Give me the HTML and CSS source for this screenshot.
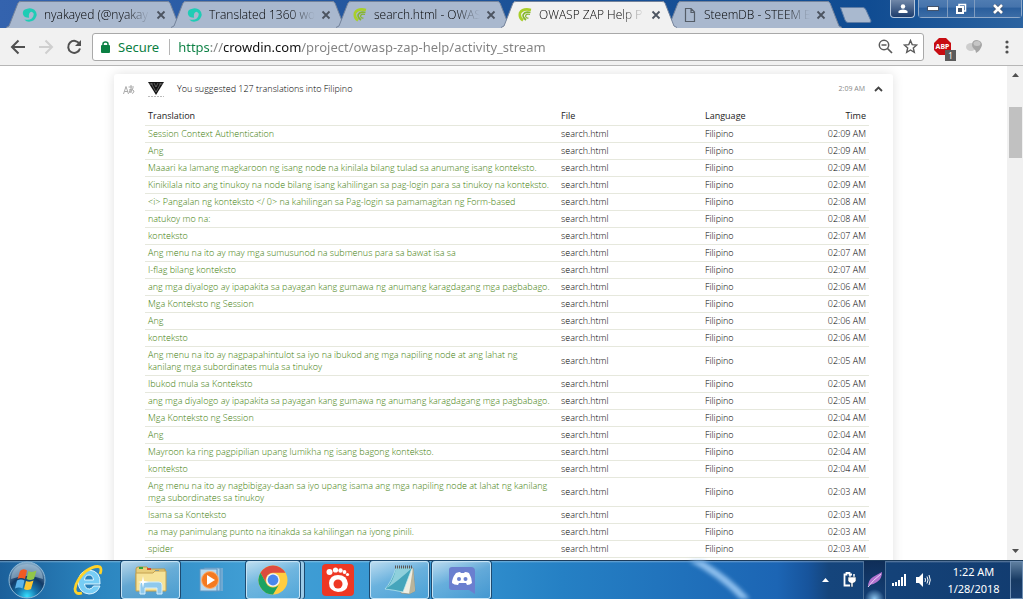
FILE: index.html
```html
<!DOCTYPE html>
<html lang="en">
<head>
  <meta charset="UTF-8">
  <meta name="viewport" content="width=device-width, initial-scale=1.0">
  <title>OWASP ZAP Help Project</title>
  <link rel="stylesheet" href="styles.css">
</head>
<body>
  <!-- Shared shapes -->
  <svg class="defs" aria-hidden="true">
    <symbol id="tab-shape" viewBox="0 0 176 28">
      <path d="M0 28 L3 26 L12 3 Q13 1 15 1 H161 Q163 1 164 3 L173 26 L176 28 Z"/>
      <path d="M0 27.5 L3 26 L12 3 Q13 1.5 15 1.5 H161 Q163 1.5 164 3 L173 26 L176 27.5" class="tab-edge"/>
    </symbol>
    <symbol id="close" viewBox="0 0 10 10">
      <path d="M1.5 1.5 L8.5 8.5 M8.5 1.5 L1.5 8.5" stroke="#4c5460" stroke-width="1.8"/>
    </symbol>
    <symbol id="steem" viewBox="0 0 16 16">
      <path fill="#1fccb5" d="M0 7 Q-1 2 4 1 Q9 -1 13 2 Q17 6 15 10 Q13 15 8 15.500 Q4 16 1.500 13 Q7 14.500 10 12 Q13 9 12 6 Q10 3 8 5 Q6 7 7 11 Q1 11 0 7 Z"/>
    </symbol>
    <symbol id="crowdin" viewBox="0 0 14 14">
      <path d="M13 2 Q5 0 2 5 Q1 10 5 12.500" fill="none" stroke="#a8cf2a" stroke-width="2.600"/>
      <path d="M12.500 4.500 Q7 3 5 7 Q5 10 8 12" fill="none" stroke="#86b52f" stroke-width="1.600"/>
      <path d="M12 6.500 Q8 5.500 7.500 8 Q8 10.500 10.500 10" fill="none" stroke="#86b52f" stroke-width="1.200"/>
    </symbol>
  </svg>

  <header class="browser">
    <div class="tab-strip">
      <div class="tab">
        <svg class="tab-bg"><use href="#tab-shape"/></svg>
        <svg class="favicon"><use href="#steem"/></svg>
        <span class="tab-title">nyakayed (@nyakay</span>
        <button class="tab-close" aria-label="Close tab"><svg><use href="#close"/></svg></button>
      </div>
      <div class="tab">
        <svg class="tab-bg"><use href="#tab-shape"/></svg>
        <svg class="favicon"><use href="#steem"/></svg>
        <span class="tab-title">Translated 1360 wo</span>
        <button class="tab-close" aria-label="Close tab"><svg><use href="#close"/></svg></button>
      </div>
      <div class="tab">
        <svg class="tab-bg"><use href="#tab-shape"/></svg>
        <svg class="favicon"><use href="#crowdin"/></svg>
        <span class="tab-title">search.html - OWAS</span>
        <button class="tab-close" aria-label="Close tab"><svg><use href="#close"/></svg></button>
      </div>
      <div class="tab active">
        <svg class="tab-bg"><use href="#tab-shape"/></svg>
        <svg class="favicon"><use href="#crowdin"/></svg>
        <span class="tab-title">OWASP ZAP Help P</span>
        <button class="tab-close" aria-label="Close tab"><svg><use href="#close"/></svg></button>
      </div>
      <div class="tab">
        <svg class="tab-bg"><use href="#tab-shape"/></svg>
        <svg class="favicon" viewBox="0 0 14 14"><path d="M2.500 .5 H8 L11.500 4 V13.500 H2.500 Z M8 .5 V4.500 H11.500" fill="none" stroke="#555d68" stroke-width="1.200"/></svg>
        <span class="tab-title">SteemDB - STEEM B</span>
        <button class="tab-close" aria-label="Close tab"><svg><use href="#close"/></svg></button>
      </div>
      <button class="new-tab" aria-label="New tab">
        <svg width="33" height="17" viewBox="0 0 33 17"><path d="M1.500 .5 H24 Q26 .5 27 3 L32 14 Q32 15.500 30 15.500 H9 Q7 15.500 6 13 Z" fill="#a9b9cf" stroke="#5f7da6"/></svg>
      </button>
      <div class="window-controls">
        <button class="win-btn profile" aria-label="Profile">
          <svg width="10" height="9" viewBox="0 0 10 9"><circle cx="5" cy="2.500" r="2.200" fill="#fff"/><path d="M.5 9 V7 Q2 5.500 5 5.500 Q8 5.500 9.500 7 V9 Z" fill="#fff"/></svg>
        </button>
        <div class="win-group">
          <button class="win-btn minimize" aria-label="Minimize"><svg width="12" height="5" viewBox="0 0 12 5"><rect x=".5" y=".5" width="11" height="4" fill="#fff" stroke="#43536b"/></svg></button>
          <button class="win-btn restore" aria-label="Restore"><svg width="12" height="12" viewBox="0 0 12 12"><path d="M4 3 V1.500 H10.500 V8 H9" fill="none" stroke="#fff" stroke-width="1.500"/><rect x="2" y="4" width="6" height="6" fill="#43536b" stroke="#fff" stroke-width="2"/></svg></button>
          <button class="win-btn close" aria-label="Close"><svg width="12" height="10" viewBox="0 0 12 10"><path d="M2 1 L10 9 M10 1 L2 9" stroke="#43536b" stroke-width="4"/><path d="M2 1 L10 9 M10 1 L2 9" stroke="#fff" stroke-width="2.600"/></svg></button>
        </div>
      </div>
    </div>

    <div class="toolbar">
      <button class="tool" aria-label="Back"><svg width="16" height="16" viewBox="0 0 16 16"><path d="M15 8 H2.500 M8.500 1.500 L2 8 L8.500 14.500" fill="none" stroke="#505050" stroke-width="2"/></svg></button>
      <button class="tool" aria-label="Forward" disabled><svg width="16" height="16" viewBox="0 0 16 16"><path d="M1 8 H13.500 M7.500 1.500 L14 8 L7.500 14.500" fill="none" stroke="#cfcfcf" stroke-width="2"/></svg></button>
      <button class="tool" aria-label="Reload"><svg width="16" height="16" viewBox="0 0 16 16"><path d="M13.500 5 A6 6 0 1 0 14 9.500" fill="none" stroke="#505050" stroke-width="2"/><path d="M15 1 V7 H9 Z" fill="#505050"/></svg></button>
      <div class="omnibox">
        <svg class="lock" width="9" height="12" viewBox="0 0 9 12"><rect y="4" width="9" height="8" rx="1" fill="#0b8043"/><path d="M2 5 V3 Q2 1 4.500 1 Q7 1 7 3 V5" fill="none" stroke="#0b8043" stroke-width="1.500"/></svg>
        <label class="secure" for="address">Secure</label>
        <input class="address" id="address" type="text" spellcheck="false" value="https://crowdin.com/project/owasp-zap-help/activity_stream">
        <button class="tool" aria-label="Zoom"><svg width="15" height="15" viewBox="0 0 15 15"><circle cx="6" cy="6" r="4.700" fill="none" stroke="#5a5a5a" stroke-width="1.500"/><path d="M3.500 6 H8.500 M9.500 9.500 L14 14" stroke="#5a5a5a" stroke-width="1.700"/></svg></button>
        <button class="tool" aria-label="Bookmark this page"><svg width="15" height="15" viewBox="0 0 15 15"><path d="M7.500 1.500 L9.200 5.600 L13.700 6 L10.300 8.900 L11.300 13.300 L7.500 11 L3.700 13.300 L4.700 8.900 L1.300 6 L5.800 5.600 Z" fill="none" stroke="#5a5a5a" stroke-width="1.400"/></svg></button>
      </div>
      <button class="ext adblock" aria-label="Adblock Plus">
        <svg width="17" height="17" viewBox="0 0 17 17"><path d="M5 0 H12 L17 5 V12 L12 17 H5 L0 12 V5 Z" fill="#c70d12"/></svg>
        <span class="abp">ABP</span>
        <span class="ext-count">1</span>
      </button>
      <button class="ext" aria-label="Extension">
        <svg width="17" height="15" viewBox="0 0 17 15"><ellipse cx="5" cy="8" rx="5" ry="4" fill="#cdcdcd"/><path d="M6 6 Q6 1 11 1 Q16 2 16 6 Q15 11 10 14 Q10 11 8 10 Q6 8 6 6 Z" fill="#a5a5a5"/><ellipse cx="11" cy="4.500" rx="3.500" ry="2.500" fill="#c6c6c6"/></svg>
      </button>
      <button class="menu" aria-label="Menu"><svg width="4" height="14" viewBox="0 0 4 14" fill="#505050"><circle cx="2" cy="2" r="1.600"/><circle cx="2" cy="7" r="1.600"/><circle cx="2" cy="12" r="1.600"/></svg></button>
    </div>
  </header>

  <div class="viewport">
    <main class="page">
      <section class="card">
        <div class="card-head">
          <svg class="type-icon" width="12" height="11" viewBox="0 0 12 11" fill="none" stroke="#aaa"><path d="M.5 10 L3 2.500 L5.500 10 M1.500 7.500 H5"/><path d="M5.500 3 H11 M8 1 V9 M6 6 Q9 4 11 7 Q11 9 9 9.500 M10 4 Q8 9 6.500 8.500 Q5.500 7 8 5.500"/></svg>
          <svg class="avatar" width="16" height="16" viewBox="0 0 16 16"><path d="M0 1 H16 L8 14 Z" fill="#151515"/><path d="M3 2 L8 11 L13 2 M6 2 L8 6 L10 2 M1 3 H5 M11 3 H15" fill="none" stroke="#888" stroke-width=".6"/><path d="M0 15.500 H16" stroke="#bbb" stroke-dasharray="2 1"/></svg>
          <span class="summary">You suggested 127 translations into Filipino</span>
          <time class="when">2:09 AM</time>
          <button class="collapse" aria-label="Collapse"><svg width="9" height="6" viewBox="0 0 9 6"><path d="M1 5 L4.500 1.500 L8 5" fill="none" stroke="#444" stroke-width="1.800"/></svg></button>
        </div>

        <table class="translations">
          <thead>
            <tr><th class="col-text">Translation</th><th class="col-file">File</th><th class="col-lang">Language</th><th class="col-time">Time</th></tr>
          </thead>
          <tbody>
            <tr><td><a href="#">Session Context Authentication</a></td><td>search.html</td><td>Filipino</td><td>02:09 AM</td></tr>
            <tr><td><a href="#">Ang</a></td><td>search.html</td><td>Filipino</td><td>02:09 AM</td></tr>
            <tr><td><a href="#">Maaari ka lamang magkaroon ng isang node na kinilala bilang tulad sa anumang isang konteksto.</a></td><td>search.html</td><td>Filipino</td><td>02:09 AM</td></tr>
            <tr><td><a href="#">Kinikilala nito ang tinukoy na node bilang isang kahilingan sa pag-login para sa tinukoy na konteksto.</a></td><td>search.html</td><td>Filipino</td><td>02:09 AM</td></tr>
            <tr><td><a href="#">&lt;i&gt; Pangalan ng konteksto &lt;/ 0&gt; na kahilingan sa Pag-login sa pamamagitan ng Form-based</a></td><td>search.html</td><td>Filipino</td><td>02:08 AM</td></tr>
            <tr><td><a href="#">natukoy mo na:</a></td><td>search.html</td><td>Filipino</td><td>02:08 AM</td></tr>
            <tr><td><a href="#">konteksto</a></td><td>search.html</td><td>Filipino</td><td>02:07 AM</td></tr>
            <tr><td><a href="#">Ang menu na ito ay may mga sumusunod na submenus para sa bawat isa sa</a></td><td>search.html</td><td>Filipino</td><td>02:07 AM</td></tr>
            <tr><td><a href="#">I-flag bilang konteksto</a></td><td>search.html</td><td>Filipino</td><td>02:07 AM</td></tr>
            <tr><td><a href="#">ang mga diyalogo ay ipapakita sa payagan kang gumawa ng anumang karagdagang mga pagbabago.</a></td><td>search.html</td><td>Filipino</td><td>02:06 AM</td></tr>
            <tr><td><a href="#">Mga Konteksto ng Session</a></td><td>search.html</td><td>Filipino</td><td>02:06 AM</td></tr>
            <tr><td><a href="#">Ang</a></td><td>search.html</td><td>Filipino</td><td>02:06 AM</td></tr>
            <tr><td><a href="#">konteksto</a></td><td>search.html</td><td>Filipino</td><td>02:06 AM</td></tr>
            <tr><td><a href="#">Ang menu na ito ay nagpapahintulot sa iyo na ibukod ang mga napiling node at ang lahat ng<br>kanilang mga subordinates mula sa tinukoy</a></td><td>search.html</td><td>Filipino</td><td>02:05 AM</td></tr>
            <tr><td><a href="#">Ibukod mula sa Konteksto</a></td><td>search.html</td><td>Filipino</td><td>02:05 AM</td></tr>
            <tr><td><a href="#">ang mga diyalogo ay ipapakita sa payagan kang gumawa ng anumang karagdagang mga pagbabago.</a></td><td>search.html</td><td>Filipino</td><td>02:05 AM</td></tr>
            <tr><td><a href="#">Mga Konteksto ng Session</a></td><td>search.html</td><td>Filipino</td><td>02:04 AM</td></tr>
            <tr><td><a href="#">Ang</a></td><td>search.html</td><td>Filipino</td><td>02:04 AM</td></tr>
            <tr><td><a href="#">Mayroon ka ring pagpipilian upang lumikha ng isang bagong konteksto.</a></td><td>search.html</td><td>Filipino</td><td>02:04 AM</td></tr>
            <tr><td><a href="#">konteksto</a></td><td>search.html</td><td>Filipino</td><td>02:04 AM</td></tr>
            <tr><td><a href="#">Ang menu na ito ay nagbibigay-daan sa iyo upang isama ang mga napiling node at lahat ng kanilang<br>mga subordinates sa tinukoy</a></td><td>search.html</td><td>Filipino</td><td>02:03 AM</td></tr>
            <tr><td><a href="#">Isama sa Konteksto</a></td><td>search.html</td><td>Filipino</td><td>02:03 AM</td></tr>
            <tr><td><a href="#">na may panimulang punto na itinakda sa kahilingan na iyong pinili.</a></td><td>search.html</td><td>Filipino</td><td>02:03 AM</td></tr>
            <tr><td><a href="#">spider</a></td><td>search.html</td><td>Filipino</td><td>02:03 AM</td></tr>
          </tbody>
        </table>
      </section>
    </main>
    <div class="scrollbar">
      <svg width="7" height="4" viewBox="0 0 7 4"><path d="M0 4 L3.500 0 L7 4 Z" fill="#505050"/></svg>
      <div class="thumb"></div>
      <svg width="7" height="4" viewBox="0 0 7 4"><path d="M0 0 L3.500 4 L7 0 Z" fill="#505050"/></svg>
    </div>
  </div>

  <footer class="taskbar">
    <button class="start" aria-label="Start">
      <svg width="38" height="38" viewBox="0 0 38 38">
        <defs>
          <radialGradient id="orb" cx=".5" cy=".95" r=".9"><stop offset="0" stop-color="#35e0ff"/><stop offset=".3" stop-color="#1676ae"/><stop offset=".6" stop-color="#123a66"/><stop offset="1" stop-color="#7fa6c4"/></radialGradient>
        </defs>
        <circle cx="19" cy="19" r="18" fill="url(#orb)" stroke="#8fb9d6"/>
        <path d="M3 18 Q4 4 19 3 Q34 4 35 18 Q19 12 3 18 Z" fill="#a9c4d8" opacity=".55"/>
        <path d="M12 10 Q15 7 19 9.500 L17 18 Q13 16 9.500 18 Z" fill="#ef5a24"/>
        <path d="M20.500 10 Q24 12 28.500 9.500 L26 18 Q22 20 18.500 18 Z" fill="#91c64a"/>
        <path d="M9 19.500 Q13 17.500 16.500 19.500 L14.500 27.500 Q11 25.500 7 27.500 Z" fill="#5cb3ea"/>
        <path d="M18 20 Q22 21.500 25.500 19.500 L23 28 Q19 30 16 28 Z" fill="#fdc731"/>
      </svg>
    </button>
    <button class="task ie" aria-label="Internet Explorer">
      <svg width="32" height="32" viewBox="0 0 32 32">
        <path d="M27 22 Q24 30 16 30 Q6 29 5 18 Q6 7 16 6 Q28 7 27 20 H11.500 Q12 25 16.500 25 Q19 25 20.500 22 Z M11.500 16 H20.500 Q20 11 16 11 Q12 11 11.500 16 Z" fill="#77cdf5" fill-rule="evenodd" stroke="#e0f6ff"/>
        <path d="M9 29 Q2 31 2 25 Q3 16 13 7 Q22 1 27 3 Q29 5 27 10" fill="none" stroke="#ffd32a" stroke-width="2.800"/>
      </svg>
    </button>
    <button class="task open" aria-label="Windows Explorer">
      <svg width="32" height="30" viewBox="0 0 32 30">
        <path d="M1 4 Q1 2 3 2 H12 L14 4 H30 V22 H1 Z" fill="#e9cf7c" stroke="#b9994b"/>
        <path d="M4 2 H8 V4 H4 Z" fill="#32a53a"/><path d="M12 3 H16 V5 H12 Z" fill="#d84a30"/><path d="M20 5 H24 V7 H20 Z" fill="#3c8fe0"/>
        <path d="M1 8 H18 L20 6 H31 V26 H1 Z" fill="#f6e398" stroke="#c4a250"/>
        <path d="M5 29 V20 Q5 17 8 17 H24 Q27 17 27 20 V29 H22 V23 H10 V29 Z" fill="#8fc9ed" stroke="#d7effc"/>
        <path d="M8 11 L9 16 L14 17 L9 18 L8 23 L7 18 L3 17 L7 16 Z" fill="#fff"/>
      </svg>
    </button>
    <button class="task media" aria-label="Media Player">
      <svg width="28" height="26" viewBox="0 0 28 26">
        <path d="M8 1 H24 V24 H8 Z" fill="#6fa9d2"/><path d="M5 1 H21 V24 H5 Z" fill="#a7cfe9" stroke="#5d96c2"/><path d="M1 2 H18 V24 H1 Z" fill="#b9d9ee" stroke="#5d96c2"/>
        <circle cx="11" cy="13" r="8.500" fill="#f47a20" stroke="#fbb173"/><path d="M8 8 L16 13 L8 18 Z" fill="#fff"/>
      </svg>
    </button>
    <button class="task open chrome" aria-label="Chrome">
      <svg width="30" height="30" viewBox="0 0 30 30">
        <circle cx="15" cy="15" r="14.500" fill="#ffcd40"/>
        <path d="M2.500 7.700 A14.500 14.500 0 0 1 27.500 7.700 H15 A7.500 7.500 0 0 0 8.500 18.700 Z" fill="#dd4b3e"/>
        <path d="M2.500 7.700 A14.500 14.500 0 0 0 15 29.500 L21.500 18.700 A7.500 7.500 0 0 1 8.500 18.700 Z" fill="#1da362"/>
        <circle cx="15" cy="15" r="6.800" fill="#f5f5f5"/><circle cx="15" cy="15" r="5.400" fill="#4a87ee"/>
      </svg>
    </button>
    <button class="task gom" aria-label="GOM Player">
      <svg width="32" height="32" viewBox="0 0 32 32">
        <rect width="32" height="32" rx="4" fill="#ee3824"/>
        <path d="M16 11 Q25 11 26 20 Q25 28 16 28 Q7 27 7 19 Q8 11 16 11 Z" fill="#fff"/><circle cx="16" cy="20" r="4.500" fill="#ee3824"/>
        <g fill="#fff"><circle cx="7.500" cy="8" r="3"/><circle cx="13.500" cy="6" r="2.600"/><circle cx="18.500" cy="6.500" r="2.200"/><circle cx="22.500" cy="8" r="1.900"/><circle cx="25.500" cy="10.500" r="1.600"/></g>
      </svg>
    </button>
    <button class="task open notepad" aria-label="Notepad">
      <svg width="32" height="30" viewBox="0 0 32 30">
        <path d="M12 3 H29 L31 26 L25 29 L17 28 Z" fill="#efeee2" stroke="#8d8b78" stroke-width=".7"/>
        <path d="M29 3 L31 26 L25 29 Z" fill="#b9b49b"/>
        <path d="M12 3 H28 L19 27 Q10 25 1 24 Q7 18 12 3 Z" fill="#45a5bb" stroke="#c3edf2" stroke-width=".7"/>
        <path d="M12 3 Q10 15 3 23 Q14 16 28 3 Z" fill="#8fd0dc"/>
        <path d="M11 2 H29" stroke="#575757" stroke-width="3" stroke-dasharray="1 1"/>
      </svg>
    </button>
    <button class="task open discord" aria-label="Discord">
      <svg width="28" height="29" viewBox="0 0 28 29">
        <path d="M4 1 H23 Q27 1 27 5 V28 L21 24 H4 Q1 24 1 21 V4 Q1 1 4 1 Z" fill="#6a7fcf"/>
        <path d="M8 7 Q11 6 12 6 L13 7 H16 L17 6 Q19 6 21 7 Q24 12 24 17 Q22 19 19 19 L18 17 H11 L10 19 Q6 19 4 17 Q4 12 8 7 Z" fill="#fff"/>
        <circle cx="11" cy="13" r="2" fill="#6a7fcf"/><circle cx="17.500" cy="13" r="2" fill="#6a7fcf"/>
      </svg>
    </button>
    <svg class="streak" viewBox="0 0 120 38" aria-hidden="true"><path d="M-14 -12 Q40 10 72 52" fill="none" stroke="#8fc0ee" stroke-width="7"/></svg>

    <div class="tray">
      <button class="tray-icon" aria-label="Show hidden icons"><svg width="7" height="4" viewBox="0 0 7 4"><path d="M0 4 L3.500 0 L7 4 Z" fill="#fff"/></svg></button>
      <svg class="power" width="14" height="16" viewBox="0 0 14 16"><path d="M7 13.500 H1.500 V2.500 H3.500 V1 H6.500 V2.500 H9" fill="none" stroke="#fff" stroke-width="1.800"/><path d="M7 2 V6 M11 2 V6" stroke="#fff" stroke-width="1.500"/><path d="M5 5 H13 V9 L11 11 H10 V15 H8 V11 H7 L5 9 Z" fill="#fff" stroke="#29435f" stroke-width=".6"/></svg>
      <button class="feather" aria-label="Feather"><svg width="16" height="16" viewBox="0 0 16 16"><path d="M1 15 Q1 8 6 5 Q11 2 15 0 Q15 7 10 10 Q6 13 2 13 Z" fill="#b173cf"/><path d="M1 15 Q6 8 14 2" fill="none" stroke="#ecd2f7"/></svg></button>
      <svg class="signal" width="15" height="12" viewBox="0 0 15 12" fill="#fff"><path d="M0 9 H2 V12 H0 Z M3 8 H5 V12 H3 Z M6 6 H8 V12 H6 Z M9 3 H11 V12 H9 Z M12 0 H14 V12 H12 Z"/></svg>
      <svg class="volume" width="15" height="14" viewBox="0 0 15 14"><path d="M0 4 H3 L7 0 V14 L3 10 H0 Z" fill="#fff"/><path d="M9 5 Q10 7 9 9 M11 3.500 Q13 7 11 10.500 M13 2 Q15.500 7 13 12" fill="none" stroke="#fff"/></svg>
      <time class="clock"><span>1:22 AM</span><span>1/28/2018</span></time>
      <button class="show-desktop" aria-label="Show desktop"></button>
    </div>
  </footer>
</body>
</html>
```

FILE: styles.css
```css
:root {
  --ui-font: "Noto Sans", "Open Sans", sans-serif;
  --page-font: "Open Sans", "Noto Sans", sans-serif;
  --link-color: #3d7d08;
  --text-color: #000;
  --line-color: #e6e8dd;
  --toolbar-color: #f1f1f1;
}
* {
  box-sizing: border-box;
}
body {
  margin: 0;
  height: 100vh;
  display: flex;
  flex-direction: column;
  overflow: hidden;
  font-family: var(--page-font);
  color: var(--text-color);
  background-color: #fff;
}
button {
  display: flex;
  align-items: center;
  justify-content: center;
  margin: 0;
  padding: 0;
  border: none;
  background: none;
  font-family: inherit;
}
.defs {
  position: absolute;
  width: 0;
  height: 0;
}

/* Tabs */
.browser {
  flex: none;
  font-family: var(--ui-font);
}
.tab-strip {
  display: flex;
  height: 28px;
  padding-left: 6px;
  background: linear-gradient(90deg, #3463ae 0, #1c5298 50%, #104c92 85%, #2c63a0 100%);
}
.tab {
  position: relative;
  display: flex;
  align-items: center;
  flex: none;
  width: 176px;
  height: 28px;
  margin-right: -11px;
  padding: 2px 16px 0 16px;
}
.tab.active {
  z-index: 1;
}
.tab-bg {
  position: absolute;
  left: 0;
  top: 0;
  width: 176px;
  height: 28px;
  fill: #a9b8ce;
}
.tab-edge {
  fill: none;
  stroke: #74839b;
}
.active .tab-bg {
  fill: var(--toolbar-color);
}
.favicon {
  position: relative;
  flex: none;
  width: 16px;
  height: 14px;
}
.tab-title {
  position: relative;
  flex: none;
  width: 108px;
  margin-left: 6px;
  overflow: hidden;
  white-space: nowrap;
  font-family: var(--page-font);
  font-size: 12px;
  font-weight: 300;
  line-height: 16px;
  color: #000;
  -webkit-mask-image: linear-gradient(90deg, #000 76%, transparent 98%);
  mask-image: linear-gradient(90deg, #000 76%, transparent 98%);
}
.tab-close {
  position: relative;
  flex: none;
  width: 10px;
  margin-left: 4px;
}
.tab-close svg {
  width: 10px;
  height: 10px;
}
.new-tab {
  align-self: center;
  margin-left: 8px;
  padding-top: 2px;
}
.window-controls {
  display: flex;
  align-items: flex-start;
  gap: 3px;
  margin-left: auto;
  padding-right: 1px;
}
.win-group {
  display: flex;
  border: 1px solid #8fa9c9;
  border-top: none;
  border-radius: 0 0 4px 4px;
}
.win-btn {
  height: 17px;
  background: linear-gradient(#4f7cb2 0, #4674ac 40%, #2b5f9d 50%, #3b6ca6 100%);
}
.win-btn + .win-btn {
  border-left: 1px solid #7f9cc0;
}
.profile {
  width: 25px;
  height: 18px;
  border: 1px solid #b4c6dc;
  border-top: none;
  border-radius: 0 0 4px 4px;
  background: linear-gradient(#7087a8, #1c3c6d);
}
.minimize {
  width: 28px;
}
.restore {
  width: 27px;
}
.close {
  width: 47px;
}

/* Toolbar */
.toolbar {
  display: flex;
  align-items: center;
  height: 38px;
  padding: 0 11px 0 9px;
  background-color: var(--toolbar-color);
  border-bottom: 1px solid #b6b6b6;
}
.tool {
  width: 18px;
  height: 18px;
  margin-right: 10px;
}
.omnibox {
  display: flex;
  align-items: center;
  flex: 1;
  height: 28px;
  margin-left: -1px;
  padding-left: 8px;
  background-color: #fff;
  border: 1px solid #a9a9a9;
  border-radius: 3px;
}
.omnibox .tool {
  margin-right: 4px;
}
.omnibox .tool + .tool {
  margin-left: 3px;
}
.secure {
  margin-left: 8px;
  padding-right: 10px;
  border-right: 1px solid #b5b5b5;
  font-size: 13px;
  line-height: 16px;
  color: #0b8043;
}
.address {
  flex: 1;
  min-width: 0;
  height: 24px;
  padding: 0 0 0 8px;
  border: none;
  outline: none;
  font-family: var(--ui-font);
  font-size: 13px;
  color: transparent;
  background: linear-gradient(90deg, #0b8043 41px, #808080 41px 54px, #111 54px 131px, #808080 131px);
  -webkit-background-clip: text;
  background-clip: text;
}
.ext {
  position: relative;
  width: 17px;
  height: 20px;
  margin-left: 15px;
}
.adblock {
  margin-left: 10px;
}
.abp {
  position: absolute;
  left: 0;
  right: 0;
  top: 4px;
  font-size: 7px;
  line-height: 12px;
  font-weight: 700;
  color: #fff;
}
.ext-count {
  position: absolute;
  right: -5px;
  bottom: -4px;
  width: 11px;
  font-size: 8px;
  line-height: 11px;
  color: #fff;
  background-color: #5b5b5b;
}
.menu {
  width: 10px;
  margin-left: 19px;
}

/* Page */
.viewport {
  display: flex;
  flex: 1;
  min-height: 0;
}
.page {
  flex: 1;
  min-width: 0;
  padding-top: 8px;
  overflow: hidden;
}
.card {
  max-width: 779px;
  min-height: 100%;
  margin: 0 auto;
  padding: 7px 24px 24px 9px;
  border-radius: 3px;
  box-shadow: 0 0 12px rgba(0, 0, 0, 0.12);
}
.card-head {
  display: flex;
  align-items: center;
  height: 16px;
}
.avatar {
  margin-left: 13px;
}
.summary {
  margin-left: 13px;
  font-size: 9px;
  line-height: 12px;
  font-weight: 300;
}
.when {
  margin-left: auto;
  font-size: 7px;
  line-height: 12px;
  color: #888;
}
.collapse {
  width: 10px;
  height: 12px;
  margin: 0 -14px 0 8px;
}
.translations {
  width: calc(100% - 22px);
  margin: 9px 0 0 22px;
  border-collapse: separate;
  border-spacing: 0;
  table-layout: fixed;
  font-size: 9px;
  line-height: 12px;
}
.translations th {
  padding: 4px 3px 3px;
  border-bottom: 1px solid var(--line-color);
  font-weight: 400;
  text-align: left;
  color: #222;
}
.translations td {
  padding: 2px 3px;
  border-bottom: 1px solid var(--line-color);
  font-weight: 300;
  white-space: nowrap;
}
.translations a {
  color: var(--link-color);
  text-decoration: none;
}
.translations .col-text {
  width: 413px;
}
.translations .col-file {
  width: 144px;
}
.translations .col-time,
.translations td:last-child {
  text-align: right;
}
.scrollbar {
  display: flex;
  flex-direction: column;
  align-items: center;
  width: 16px;
  padding: 7px 0;
  background-color: #f1f1f1;
}
.thumb {
  width: 13px;
  height: 51px;
  margin: 30px 0 auto;
  background-color: #c1c1c1;
}

/* Taskbar */
.taskbar {
  position: relative;
  display: flex;
  flex: none;
  height: 39px;
  padding-left: 8px;
  border-top: 1px solid #1c3c5c;
  background:
    linear-gradient(rgba(255, 255, 255, 0.35), transparent 2px),
    linear-gradient(90deg, #1b609b 0, #2c86c0 10%, #419fd5 25%, #3696d2 42%, #2580c4 55%, #1c65b4 76%, #17549c 79%, #15457c 81%, #123c70 100%);
}
.start {
  width: 38px;
}
.task {
  width: 59px;
  height: 38px;
  margin-right: 3px;
}
.open {
  border: 1px solid #c5e3f5;
  border-radius: 3px;
  box-shadow: 0 0 0 1px #1d4a70;
  background: linear-gradient(160deg, rgba(255, 255, 255, 0.65), rgba(255, 255, 255, 0.25) 45%, rgba(255, 255, 255, 0.1));
}
.ie {
  margin-left: 13px;
}
/* second edge: several windows are grouped */
.chrome {
  width: 54px;
  margin: 0 8px 0 1px;
  box-shadow: 0 0 0 1px #1d4a70, 4px 0 0 0 #9ccbe8, 5px 0 0 0 #1d4a70;
}
.streak {
  position: absolute;
  left: 67%;
  top: 0;
  width: 120px;
  height: 38px;
  filter: blur(2px);
}
.tray {
  display: flex;
  align-items: center;
  margin-left: auto;
  color: #fff;
  font-family: var(--ui-font);
}
.power {
  margin-left: 14px;
}
.feather {
  width: 23px;
  height: 38px;
  margin: 0 6px;
  border: 1px solid #4d7199;
  border-width: 0 1px;
  background: radial-gradient(circle at 50% 100%, #8cc4ee 0, #123c70 25%, #0f2d57 100%);
}
.volume {
  margin-left: 9px;
}
.clock {
  display: flex;
  flex-direction: column;
  align-items: center;
  width: 79px;
  padding-left: 6px;
  font-size: 11px;
  line-height: 17px;
}
.show-desktop {
  width: 13px;
  height: 38px;
  border: 1px solid #6f8fb3;
  background: linear-gradient(#5f7f9f, #173a63 50%, #1a3f70);
}
```
